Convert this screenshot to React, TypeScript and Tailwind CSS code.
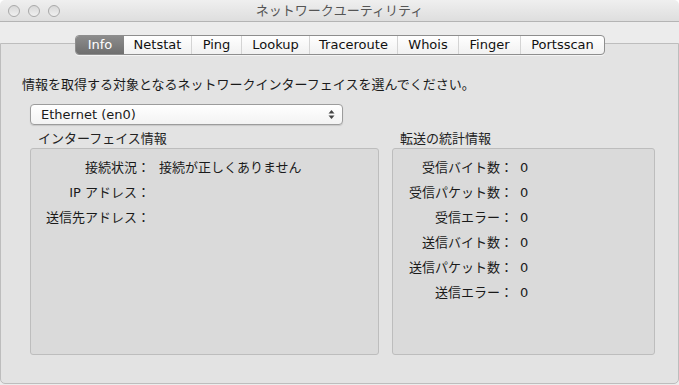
const font = { fontFamily: '"DejaVu Sans", "Noto Sans CJK JP", sans-serif' }

const tabs = [
  { label: 'Info', w: 'w-[48px]' },
  { label: 'Netstat', w: 'w-[67px]' },
  { label: 'Ping', w: 'w-[50px]' },
  { label: 'Lookup', w: 'w-[68px]' },
  { label: 'Traceroute', w: 'w-[88px]' },
  { label: 'Whois', w: 'w-[61px]' },
  { label: 'Finger', w: 'w-[62px]' },
  { label: 'Portsscan', w: 'w-[84px]' },
]

const ifaceRows = [
  { label: '接続状況：', value: '接続が正しくありません' },
  { label: 'IP アドレス：', value: '' },
  { label: '送信先アドレス：', value: '' },
]

const statRows = ['受信バイト数：', '受信パケット数：', '受信エラー：', '送信バイト数：', '送信パケット数：', '送信エラー：']

function TrafficLight() {
  return <span className="size-[12px] rounded-full border border-[#a9a9a9] bg-gradient-to-b from-[#d8d8d8] to-[#f0f0f0]" />
}

export default function App() {
  return (
    <div className="flex h-[385px] w-[679px] flex-col bg-white text-[13px] text-[#1a1a1a]" style={font}>
      <div className="relative flex h-[22px] shrink-0 items-center rounded-t-[5px] border-b border-[#b4b4b4] bg-gradient-to-b from-[#efefef] to-[#dedede] px-[8px]">
        <div className="flex gap-[8px]">
          <TrafficLight />
          <TrafficLight />
          <TrafficLight />
        </div>
        <div className="absolute inset-x-0 top-0 flex h-[21px] items-center justify-center text-[13px] text-[#555]">
          ネットワークユーティリティ
        </div>
      </div>

      <div className="h-[363px] bg-[#ececec] pt-[21px]">
        <div className="flex h-[341px] flex-col rounded-b-[5px] border border-[#bdbdbd] bg-[#e3e3e3]">
          <div className="-mt-[9px] flex justify-center pl-[1px]">
            <div className="flex h-[20px] overflow-hidden rounded-[4px] border border-[#8e8e8e] bg-gradient-to-b from-white to-[#f1f1f1] shadow-[0_1px_0_rgba(255,255,255,0.6)]">
              {tabs.map((t, i) => (
                <div
                  key={t.label}
                  className={`flex ${t.w} items-center justify-center ${
                    i === 0
                      ? 'bg-gradient-to-b from-[#8c8c8c] to-[#6f6f6f] text-white'
                      : 'text-[#111]'
                  } ${i > 1 ? 'border-l border-[#d4d4d4]' : ''}`}
                >
                  {t.label}
                </div>
              ))}
            </div>
          </div>

          <p className="mt-[22px] pl-[21px] leading-[16px]">
            情報を取得する対象となるネットワークインターフェイスを選んでください。
          </p>

          <div className="ml-[29px] mt-[11px] flex h-[21px] w-[313px] items-center justify-between rounded-[4px] border border-[#9c9c9c] bg-gradient-to-b from-white to-[#f3f3f3] pl-[10px] pr-[7px] shadow-[0_1px_1px_rgba(0,0,0,0.12)]">
            <span>Ethernet (en0)</span>
            <svg width="7" height="11" viewBox="0 0 7 11">
              <path d="M3.5 1 L6.5 4.5 L0.5 4.5 Z" fill="#444" />
              <path d="M3.5 10 L6.5 6.5 L0.5 6.5 Z" fill="#444" />
            </svg>
          </div>

          <div className="mt-[5px] flex gap-[13px] pl-[29px]">
            <div className="flex flex-col">
              <div className="h-[18px] pl-[8px] leading-[18px] text-[#222]">インターフェイス情報</div>
              <div className="h-[207px] w-[349px] rounded-[3px] border border-[#bdbdbd] bg-[#dadada] pt-[6px]">
                {ifaceRows.map((r) => (
                  <div key={r.label} className="flex h-[25px] items-center">
                    <span className="w-[119px] text-right">{r.label}</span>
                    <span className="pl-[9px]">{r.value}</span>
                  </div>
                ))}
              </div>
            </div>
            <div className="flex flex-col">
              <div className="h-[18px] pl-[8px] leading-[18px] text-[#222]">転送の統計情報</div>
              <div className="h-[207px] w-[263px] rounded-[3px] border border-[#bdbdbd] bg-[#dadada] pt-[6px]">
                {statRows.map((r) => (
                  <div key={r} className="flex h-[25px] items-center">
                    <span className="w-[120px] text-right">{r}</span>
                    <span className="pl-[7px]">0</span>
                  </div>
                ))}
              </div>
            </div>
          </div>
        </div>
      </div>
    </div>
  )
}
